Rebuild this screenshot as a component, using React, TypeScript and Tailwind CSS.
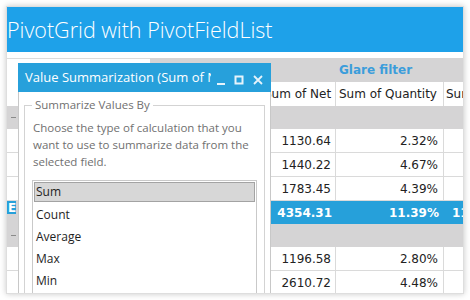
import React from 'react'

const dataRowsA = [
  { net: '1130.64', qty: '2.32%' },
  { net: '1440.22', qty: '4.67%' },
  { net: '1783.45', qty: '4.39%' },
]

const dataRowsB = [
  { net: '1196.58', qty: '2.80%' },
  { net: '2610.72', qty: '4.48%' },
]

const methods = ['Sum', 'Count', 'Average', 'Max', 'Min']

function GroupRow() {
  return (
    <div className="flex h-[23px] bg-[#d5d4d5]">
      <div className="flex w-[253px] shrink-0 items-center pl-[4px]">
        <span className="h-[1px] w-[5px] bg-[#8a8a8a]" />
      </div>
    </div>
  )
}

function DataRow({ net, qty }: { net: string; qty: string }) {
  return (
    <div className="flex h-[24px] border-b border-[#dadada]">
      <div className="w-[253px] shrink-0" />
      <div className="flex w-[76px] shrink-0 items-center justify-end border-r border-[#dadada] pr-[4px]">{net}</div>
      <div className="flex w-[108px] shrink-0 items-center justify-end border-r border-[#dadada] pr-[5px]">{qty}</div>
      <div className="flex-1" />
    </div>
  )
}

function PivotTable() {
  return (
    <div className="mt-[6px] font-['DejaVu_Sans',sans-serif] text-[12px] text-[#222]">
      <div className="flex h-[24px]">
        <div className="w-[143px] shrink-0 border-t border-[#dcdcdc]" />
        <div className="flex flex-1 items-center bg-[#d5d4d5] pl-[189px] font-bold text-[#3b9ddb]">
          Glare filter
        </div>
      </div>
      <div className="flex h-[24px] whitespace-nowrap">
        <div className="w-[253px] shrink-0" />
        <div className="flex w-[76px] shrink-0 items-center border-r border-[#dadada] pl-[4px]">Sum of Net</div>
        <div className="flex w-[108px] shrink-0 items-center border-r border-[#dadada] pl-[3px]">Sum of Quantity</div>
        <div className="flex flex-1 items-center overflow-hidden pl-[2px]">Sum of Net Sales</div>
      </div>
      <GroupRow />
      {dataRowsA.map((r) => (
        <DataRow key={r.net} {...r} />
      ))}
      <div className="flex h-[23px] bg-[#26a0da] font-bold text-white">
        <div className="w-[253px] shrink-0 bg-[#d5d4d5]">
          <div className="flex h-[13px] w-[9px] items-center bg-[#26a0da] pl-[1px] leading-none">E</div>
        </div>
        <div className="flex w-[76px] shrink-0 items-center justify-end pr-[4px]">4354.31</div>
        <div className="flex w-[108px] shrink-0 items-center justify-end pr-[5px]">11.39%</div>
        <div className="flex flex-1 items-center overflow-hidden whitespace-nowrap pl-[8px]">11.39%</div>
      </div>
      <GroupRow />
      {dataRowsB.map((r) => (
        <DataRow key={r.net} {...r} />
      ))}
    </div>
  )
}

function SummaryDialog() {
  return (
    <div className="absolute left-[11px] top-[56px] z-10 flex h-[260px] w-[253px] flex-col font-['Open_Sans',sans-serif]">
      <div className="flex h-[29px] shrink-0 items-center bg-[#27a0db]">
        <span className="w-[193px] overflow-hidden whitespace-nowrap pl-[7px] text-[13px] text-white">
          Value Summarization (Sum of Net)
        </span>
        <svg width="60" height="29" viewBox="0 0 60 29" className="shrink-0">
          <rect x="6" y="20" width="8" height="2" fill="#e6f3fb" />
          <rect x="24.5" y="13.5" width="7" height="7" fill="none" stroke="#e6f3fb" strokeWidth="2" />
          <path d="M43 13 L51 21 M51 13 L43 21" stroke="#e6f3fb" strokeWidth="1.8" />
        </svg>
      </div>
      <div className="flex-1 border-x border-[#c8c8c8] bg-white px-[5px]">
        <fieldset className="mt-[5px] h-[240px] border border-[#d3d3d3] px-[7px]">
          <legend className="px-[3px] text-[11.5px] leading-[16px] text-[#707070]">Summarize Values By</legend>
          <p className="mt-[6px] pl-px text-[11.5px] leading-[17px] text-[#707070]">
            Choose the type of calculation that you
            <br />
            want to use to summarize data from the
            <br />
            selected field.
          </p>
          <div className="mt-[10px] h-[160px] border border-[#c9c9c9] p-px text-[12px] text-[#1e1e1e]">
            {methods.map((m, i) =>
              i === 0 ? (
                <div key={m} className="mb-[2px] flex h-[20px] items-center border border-[#a3a3a3] bg-[#d7d7d7] pl-px">
                  {m}
                </div>
              ) : (
                <div key={m} className="flex h-[22px] items-center pl-[2px]">
                  {m}
                </div>
              )
            )}
          </div>
        </fieldset>
      </div>
    </div>
  )
}

export default function App() {
  return (
    <div className="h-[300px] w-[470px] bg-white p-[6px]">
      <div className="relative h-[288px] w-[458px] overflow-hidden border border-[#dedede] bg-white shadow-[0_0_6px_rgba(0,0,0,0.22)]">
        <header className="flex h-[45px] items-center overflow-hidden bg-[#1ea1e9]">
          <h1 className="whitespace-nowrap font-['Open_Sans',sans-serif] text-[21.5px] font-light leading-none text-white">
            PivotGrid with PivotFieldList
          </h1>
        </header>
        <PivotTable />
        <SummaryDialog />
      </div>
    </div>
  )
}
